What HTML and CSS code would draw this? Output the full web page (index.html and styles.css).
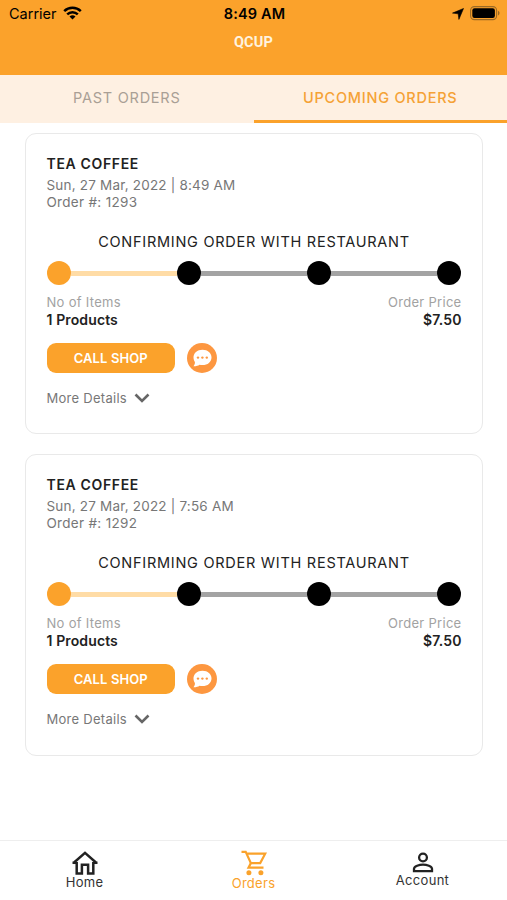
FILE: index.html
```html
<!DOCTYPE html>
<html lang="en">
<head>
  <meta charset="UTF-8" />
  <meta name="viewport" content="width=device-width, initial-scale=1.0"/>
  <title>QCUP - Orders</title>
  <link rel="stylesheet" href="styles.css">
</head>
<body>

  <header>
    <div class="status-bar">
      <div class="carrier">
        <span>Carrier</span>
        <svg width="19" height="14" viewBox="0 0 19 14" fill="none" stroke="#000" stroke-width="2.5">
          <path d="M1.2 5.1a12 12 0 0 1 16.6 0"/>
          <path d="M4.2 8.3a7.6 7.6 0 0 1 10.6 0"/>
          <path d="M9.5 13.6 6.5 10.6a4.3 4.3 0 0 1 6 0z" fill="#000" stroke="none"/>
        </svg>
      </div>
      <span class="time">8:49 AM</span>
      <div class="indicators">
        <svg width="12" height="12" viewBox="0 0 12 12"><path d="M11.5.5 6.9 11.4 6.2 5.8.5 5.1z" fill="#000" stroke="#000" stroke-width=".6"/></svg>
        <svg width="30" height="15" viewBox="0 0 30 15">
          <rect x=".6" y=".6" width="26" height="13" rx="3.8" fill="none" stroke="#9b6a25" stroke-width="1.1"/>
          <rect x="2.3" y="2.3" width="22.6" height="9.6" rx="2.2"/>
          <path d="M28 4.8c2 .8 2 3.8 0 4.6z" fill="#9b6a25"/>
        </svg>
      </div>
    </div>
    <h1>QCUP</h1>
  </header>

  <nav class="tabs">
    <div class="tab">PAST ORDERS</div>
    <div class="tab active">UPCOMING ORDERS</div>
  </nav>

  <!-- Orders -->
  <main class="orders">
    <section class="card">
      <h2>TEA COFFEE</h2>
      <p class="date">Sun, 27 Mar, 2022 | 8:49 AM</p>
      <p class="number">Order #: 1293</p>
      <p class="state">CONFIRMING ORDER WITH RESTAURANT</p>
      <div class="steps">
        <i class="dot done"></i><i class="line done"></i><i class="dot"></i><i class="line"></i><i class="dot"></i><i class="line"></i><i class="dot"></i>
      </div>
      <div class="summary">
        <div>
          <p class="label">No of Items</p>
          <p class="value">1 Products</p>
        </div>
        <div class="right">
          <p class="label">Order Price</p>
          <p class="value">$7.50</p>
        </div>
      </div>
      <div class="actions">
        <button class="call">CALL SHOP</button>
        <button class="chat">
          <svg width="30" height="30" viewBox="0 0 30 30">
            <path d="M15.5 6.7c-5.200 0-9 3.400-9 7.700 0 2 .9 3.600 1.400 4.700.2 1.700-.5 3-1.400 4.100 2.300.1 4.600-.5 6-1.500 1 .3 1.900.4 3 .4 5.200 0 9-3.300 9-7.700s-3.800-7.700-9-7.700z" fill="#fff"/>
            <g fill="#fd9740"><circle cx="11" cy="14.600" r="1.200"/><circle cx="15.400" cy="14.600" r="1.200"/><circle cx="19.800" cy="14.600" r="1.200"/></g>
          </svg>
        </button>
      </div>
      <div class="more">
        <span>More Details</span>
        <svg width="16" height="10" viewBox="0 0 16 10"><path d="M1.500 1.500 8 7.900l6.500-6.400" fill="none" stroke="#666" stroke-width="2.600"/></svg>
      </div>
    </section>

    <section class="card">
      <h2>TEA COFFEE</h2>
      <p class="date">Sun, 27 Mar, 2022 | 7:56 AM</p>
      <p class="number">Order #: 1292</p>
      <p class="state">CONFIRMING ORDER WITH RESTAURANT</p>
      <div class="steps">
        <i class="dot done"></i><i class="line done"></i><i class="dot"></i><i class="line"></i><i class="dot"></i><i class="line"></i><i class="dot"></i>
      </div>
      <div class="summary">
        <div>
          <p class="label">No of Items</p>
          <p class="value">1 Products</p>
        </div>
        <div class="right">
          <p class="label">Order Price</p>
          <p class="value">$7.50</p>
        </div>
      </div>
      <div class="actions">
        <button class="call">CALL SHOP</button>
        <button class="chat">
          <svg width="30" height="30" viewBox="0 0 30 30">
            <path d="M15.5 6.7c-5.200 0-9 3.400-9 7.700 0 2 .9 3.600 1.400 4.700.2 1.700-.5 3-1.400 4.100 2.300.1 4.600-.5 6-1.500 1 .3 1.900.4 3 .4 5.200 0 9-3.300 9-7.700s-3.800-7.700-9-7.700z" fill="#fff"/>
            <g fill="#fd9740"><circle cx="11" cy="14.600" r="1.200"/><circle cx="15.400" cy="14.600" r="1.200"/><circle cx="19.800" cy="14.600" r="1.200"/></g>
          </svg>
        </button>
      </div>
      <div class="more">
        <span>More Details</span>
        <svg width="16" height="10" viewBox="0 0 16 10"><path d="M1.500 1.500 8 7.900l6.500-6.400" fill="none" stroke="#666" stroke-width="2.600"/></svg>
      </div>
    </section>
  </main>

  <!-- Bottom bar -->
  <nav class="bottom-bar">
    <div class="item">
      <svg width="28" height="24" viewBox="0 0 28 24" fill="none" stroke="#222" stroke-width="2.500">
        <path d="M2.200 12.200 14 1.900l11.800 10.300M1.500 11.800h4M22.500 11.800h4" />
        <path d="M5.700 11v11.500h5.200v-8.800h6.200v8.800h5.200V11"/>
      </svg>
      <span>Home</span>
    </div>
    <div class="item cart">
      <svg width="28" height="26" viewBox="0 0 28 26" fill="none" stroke="#faa22b" stroke-width="2.200">
        <path d="M1.500 1.800h4.200l5.200 11.300h9.300l5-9.400H6.600"/>
        <path d="M10.900 13.100 8.500 17.700h15"/>
        <g fill="#faa22b" stroke="none"><circle cx="8.900" cy="22.700" r="2.500"/><circle cx="20.900" cy="22.700" r="2.500"/></g>
      </svg>
      <span>Orders</span>
    </div>
    <div class="item account">
      <svg width="22" height="21" viewBox="0 0 22 21" fill="none" stroke="#222" stroke-width="2.300">
        <circle cx="11" cy="5.500" r="3.900"/>
        <path d="M2 19.200v-2.400c0-2.500 5.300-4.200 9-4.200s9 1.700 9 4.200v2.400z"/>
      </svg>
      <span>Account</span>
    </div>
  </nav>

</body>
</html>
```
FILE: styles.css
```css
* { margin: 0; padding: 0; box-sizing: border-box; }
body {
  display: flex;
  flex-direction: column;
  height: 900px;
  overflow: hidden;
  background-color: #fff;
  font-family: Inter, "Liberation Sans", sans-serif;
  white-space: nowrap;
}
svg { display: block; }

header {
  height: 75px;
  background-color: #fba22b;
}
.status-bar {
  display: grid;
  grid-template-columns: 1fr auto 1fr;
  align-items: center;
  height: 27px;
  padding: 0 7px 0 9px;
  font-size: 14.5px;
}
.carrier {
  display: flex;
  align-items: center;
  gap: 6px;
}
.carrier svg { margin-top: -2px; }
.time {
  font-weight: 600;
  letter-spacing: 0.15px;
}
.indicators {
  display: flex;
  justify-content: flex-end;
  align-items: center;
  gap: 6px;
}
header h1 {
  font: 700 14.5px/32px Roboto, sans-serif;
  letter-spacing: 0.2px;
  color: #fff3df;
  text-align: center;
}

.tabs {
  display: flex;
  height: 48px;
  background-color: #fef0e2;
}
.tab {
  flex: 1;
  text-align: center;
  font-size: 14.5px;
  line-height: 46px;
  letter-spacing: 0.75px;
  color: #a99f95;
}
.tab.active {
  border-bottom: 3px solid #fba22b;
  color: #f5a236;
  font-weight: 500;
}

.orders {
  flex: 1;
  display: flex;
  flex-direction: column;
  gap: 20px;
  padding: 10px 24.5px 0 25px;
}
.card {
  height: 301.3px;
  padding: 20px 20px 0 20.5px;
  border: 1.5px solid #e9e9e9;
  border-radius: 11px;
  color: #222;
}
.card h2 {
  font-size: 14px;
  font-weight: 600;
  line-height: 20px;
  letter-spacing: 0.65px;
  margin-bottom: 3px;
}
.date, .number {
  font-size: 13.5px;
  line-height: 17px;
  letter-spacing: 0.2px;
  color: #777;
}
.number { letter-spacing: 0.3px; }
.state {
  margin-top: 20px;
  font-size: 14.5px;
  line-height: 22px;
  letter-spacing: 0.73px;
  text-align: center;
}
.steps {
  display: flex;
  align-items: center;
  margin-top: 8px;
}
.dot {
  width: 24px;
  height: 24px;
  border-radius: 50%;
  background-color: #000;
}
.line {
  flex: 1;
  height: 5px;
  background-color: #a3a3a3;
}
.dot.done { background-color: #fba22b; }
.line.done { background-color: #ffdca6; }

.summary {
  display: flex;
  justify-content: space-between;
  margin-top: 9px;
}
.label {
  font-size: 13px;
  line-height: 17px;
  letter-spacing: 0.3px;
  color: #a2a2a2;
}
.value {
  font-size: 14px;
  font-weight: 600;
  line-height: 17px;
  letter-spacing: 0.12px;
}
.right { text-align: right; }

.actions {
  display: flex;
  gap: 12px;
  margin-top: 15px;
}
.actions button {
  height: 30px;
  border: none;
  font-family: inherit;
}
.call {
  width: 128.5px;
  border-radius: 9px;
  background-color: #fba22b;
  color: #fff;
  font-size: 13px;
  font-weight: 600;
  letter-spacing: 0.1px;
}
.chat {
  width: 30px;
  border-radius: 50%;
  background-color: #fd9740;
}
.more {
  display: flex;
  align-items: center;
  gap: 7px;
  margin-top: 16px;
  font-size: 13px;
  line-height: 18px;
  letter-spacing: 0.27px;
  color: #777;
}

.bottom-bar {
  display: flex;
  height: 60px;
  border-top: 1px solid #eee;
}
.item {
  flex: 1;
  display: flex;
  flex-direction: column;
  align-items: center;
  padding-top: 10px;
  font-size: 13px;
  line-height: 15px;
  letter-spacing: 0.3px;
  color: #333;
}
.cart {
  padding-top: 9px;
  color: #faa22b;
}
.account { padding-top: 11px; }
```
